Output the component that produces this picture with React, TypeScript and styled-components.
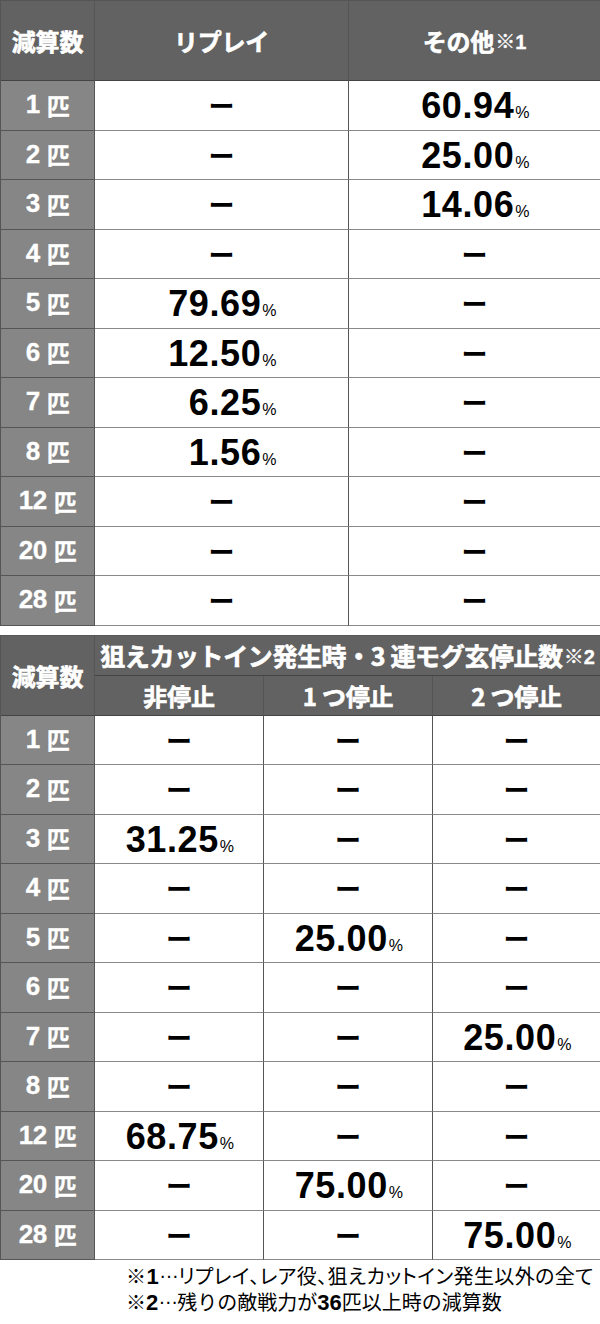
import React from 'react';
import styled, { createGlobalStyle } from 'styled-components';

const GlobalStyle = createGlobalStyle`
  html, body {
    margin: 0;
    padding: 0;
    background: #ffffff;
  }
  body {
    font-family: 'Liberation Sans', 'Noto Sans CJK JP', sans-serif;
  }
`;

type Cell = string | null;

const table1: [string, Cell, Cell][] = [
  ['1', null, '60.94'],
  ['2', null, '25.00'],
  ['3', null, '14.06'],
  ['4', null, null],
  ['5', '79.69', null],
  ['6', '12.50', null],
  ['7', '6.25', null],
  ['8', '1.56', null],
  ['12', null, null],
  ['20', null, null],
  ['28', null, null],
];

const table2: [string, Cell, Cell, Cell][] = [
  ['1', null, null, null],
  ['2', null, null, null],
  ['3', '31.25', null, null],
  ['4', null, null, null],
  ['5', null, '25.00', null],
  ['6', null, null, null],
  ['7', null, null, '25.00'],
  ['8', null, null, null],
  ['12', '68.75', null, null],
  ['20', null, '75.00', null],
  ['28', null, null, '75.00'],
];

function Value({ v }: { v: Cell }) {
  if (!v) return <Dash>ー</Dash>;
  return (
    <NumBox>
      <Num>{v}</Num>
      <Pct>%</Pct>
    </NumBox>
  );
}

export default function App(): JSX.Element {
  return (
    <Page>
      <GlobalStyle />
      <Table1>
        <HeadCell>減算数</HeadCell>
        <HeadCell>リプレイ</HeadCell>
        <HeadCell>
          その他<Note>※1</Note>
        </HeadCell>
        {table1.map(([label, a, b]) => (
          <React.Fragment key={`t1_${label}`}>
            <LabelCell>
              {label}
              <Hiki>匹</Hiki>
            </LabelCell>
            <DataCell>
              <Value v={a} />
            </DataCell>
            <DataCell>
              <Value v={b} />
            </DataCell>
          </React.Fragment>
        ))}
      </Table1>

      <Table2>
        <HeadCell $rowSpan={2}>減算数</HeadCell>
        <HeadCell $colSpan={3} $wide>
          狙えカットイン発生時・3 連モグ玄停止数<Note>※2</Note>
        </HeadCell>
        <HeadCell>非停止</HeadCell>
        <HeadCell>1 つ停止</HeadCell>
        <HeadCell>2 つ停止</HeadCell>
        {table2.map(([label, a, b, c]) => (
          <React.Fragment key={`t2_${label}`}>
            <LabelCell>
              {label}
              <Hiki>匹</Hiki>
            </LabelCell>
            <DataCell>
              <Value v={a} />
            </DataCell>
            <DataCell>
              <Value v={b} />
            </DataCell>
            <DataCell>
              <Value v={c} />
            </DataCell>
          </React.Fragment>
        ))}
      </Table2>

      <Footnotes>
        <FootBlock>
          <FootLine $palt>
            ※<b>1</b>
            <Ellipsis>…</Ellipsis>リプレイ、レア役、狙えカットイン発生以外の全て
          </FootLine>
          <FootLine>
            ※<b>2</b>
            <Ellipsis>…</Ellipsis>残りの敵戦力が<b>36</b>匹以上時の減算数
          </FootLine>
        </FootBlock>
      </Footnotes>
    </Page>
  );
}

const Page = styled.div`
  width: 600px;
  display: flex;
  flex-direction: column;
`;

const TableBase = styled.div`
  display: grid;
  box-sizing: border-box;
  border-left: 1px solid #555;
  border-top: 1px solid #555;
`;

const Table1 = styled(TableBase)`
  grid-template-columns: 94px 254px 252px;
  grid-template-rows: 80px repeat(11, 49.5px);
`;

const Table2 = styled(TableBase)`
  margin-top: 9px;
  grid-template-columns: 94px 169px 169px 168px;
  grid-template-rows: 40px 40px repeat(11, 49.5px);
`;

const CellBase = styled.div`
  box-sizing: border-box;
  display: flex;
  align-items: center;
  justify-content: center;
  border-right: 1px solid #555;
  border-bottom: 1px solid #6e6e6e;
  min-width: 0;
`;

const HeadCell = styled(CellBase)<{ $rowSpan?: number; $colSpan?: number; $wide?: boolean }>`
  background: #626262;
  color: #ffffff;
  font-family: 'Noto Sans CJK JP', sans-serif;
  font-weight: 700;
  font-size: ${(p) => (p.$wide ? '25px' : '24px')};
  letter-spacing: ${(p) => (p.$wide ? '-0.4px' : '-0.2px')};
  -webkit-text-stroke: 0.6px #ffffff;
  white-space: nowrap;
  border-bottom-color: #444;
  grid-row: ${(p) => (p.$rowSpan ? `span ${p.$rowSpan}` : 'auto')};
  grid-column: ${(p) => (p.$colSpan ? `span ${p.$colSpan}` : 'auto')};
`;

const Note = styled.span`
  font-family: 'Liberation Sans', 'Noto Sans CJK JP', sans-serif;
  font-size: 20px;
  font-weight: 700;
  margin-left: 1px;
  letter-spacing: 0;
  -webkit-text-stroke: 0.3px #ffffff;
`;

const LabelCell = styled(CellBase)`
  background: #868686;
  color: #ffffff;
  font-family: 'Liberation Sans', 'Noto Sans CJK JP', sans-serif;
  font-weight: 700;
  font-size: 26px;
  letter-spacing: -0.5px;
  -webkit-text-stroke: 0.3px #ffffff;
  border-bottom-color: #555;
  padding-bottom: 1px;
`;

const Hiki = styled.span`
  font-family: 'Noto Sans CJK JP', sans-serif;
  font-size: 23px;
  font-weight: 700;
  margin-left: 7px;
`;

const DataCell = styled(CellBase)`
  background: #ffffff;
  color: #000000;
  border-bottom-color: #8a8a8a;
`;

const NumBox = styled.span`
  display: inline-flex;
  align-items: baseline;
  justify-content: flex-end;
  width: 110px;
  padding-top: 2px;
`;

const Num = styled.span`
  font-family: 'Liberation Sans', sans-serif;
  font-weight: 700;
  font-size: 36px;
  letter-spacing: 0.6px;
`;

const Pct = styled.span`
  font-family: 'Liberation Sans', sans-serif;
  font-size: 16px;
  margin-left: 1px;
`;

const Dash = styled.span`
  font-family: 'Noto Sans CJK JP', sans-serif;
  font-weight: 700;
  font-size: 26px;
  line-height: 1;
`;

const Footnotes = styled.div`
  display: flex;
  justify-content: flex-end;
  padding: 4px 6px 0 0;
`;

const FootBlock = styled.div`
  display: flex;
  flex-direction: column;
`;

const FootLine = styled.div<{ $palt?: boolean }>`
  font-family: 'Liberation Sans', 'Noto Sans CJK JP', sans-serif;
  font-size: 20px;
  line-height: 25px;
  color: #000;
  white-space: nowrap;
  font-feature-settings: ${(p) => (p.$palt ? "'palt'" : 'normal')};
  letter-spacing: ${(p) => (p.$palt ? '0.4px' : '0')};

  b {
    font-weight: 700;
    font-size: 22px;
  }
`;

const Ellipsis = styled.span`
  position: relative;
  top: -6px;
  letter-spacing: -1px;
`;
